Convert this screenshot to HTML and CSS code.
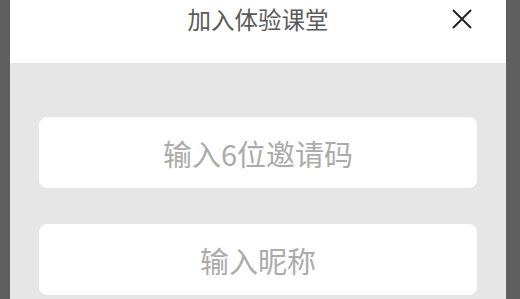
FILE: index.html
```html
<!DOCTYPE html>
<html lang="zh">
<head>
<meta charset="utf-8">
<link rel="stylesheet" href="styles.css">
</head>
<body>
<div class="screen">
  <div class="side side-left"></div>
  <div class="panel">
    <div class="header">
      <div class="title">加入体验课堂</div>
      <button class="close" aria-label="关闭">
        <svg width="20" height="20" viewBox="0 0 20 20"><path d="M1 1 L19 19 M19 1 L1 19" stroke="#222" stroke-width="2" fill="none"/></svg>
      </button>
    </div>
    <div class="body">
      <div class="field">输入6位邀请码</div>
      <div class="field">输入昵称</div>
    </div>
  </div>
  <div class="side side-right"></div>
</div>
</body>
</html>
```
FILE: styles.css
```css
html, body {
  margin: 0;
  padding: 0;
  width: 520px;
  height: 299px;
  overflow: hidden;
  background: #5e5e5e;
  font-family: "Noto Sans CJK SC", "Noto Sans", sans-serif;
}
.screen {
  display: flex;
  width: 520px;
  height: 299px;
}
.side {
  background: #5f5f5f;
}
.side-left { width: 10px; }
.side-right { flex: 1; }
.panel {
  width: 496px;
  display: flex;
  flex-direction: column;
  background: #e6e6e6;
}
.header {
  position: relative;
  height: 63px;
  background: #fff;
}
.title {
  text-align: center;
  font-size: 23.5px;
  line-height: 39px;
  color: #5a5a5a;
}
.close {
  position: absolute;
  top: 9px;
  right: 34px;
  width: 20px;
  height: 20px;
  padding: 0;
  border: 0;
  background: none;
  display: block;
}
.close svg { display: block; }
.body {
  padding: 54px 29px 0;
  display: flex;
  flex-direction: column;
  gap: 36px;
}
.field {
  height: 71px;
  background: #fff;
  border-radius: 8px;
  display: flex;
  align-items: center;
  justify-content: center;
  font-size: 29px;
  color: #ababab;
}
```
